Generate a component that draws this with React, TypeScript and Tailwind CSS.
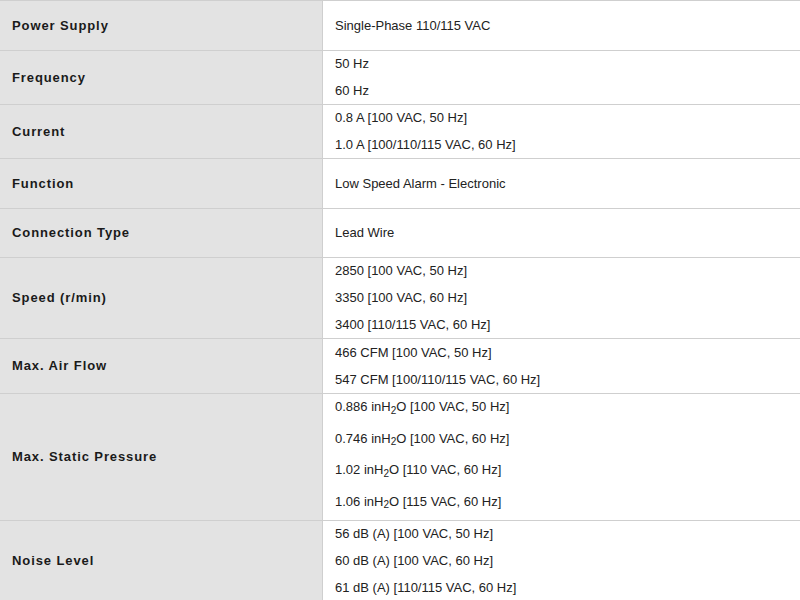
import React from 'react'

type Spec = {
  label: string
  values: React.ReactNode[]
  rowH: string
  lineH?: string
}

const H2O = (
  <>
    inH<sub className="text-[10px] leading-none">2</sub>O
  </>
)

const specs: Spec[] = [
  { label: 'Power Supply', values: ['Single-Phase 110/115 VAC'], rowH: 'h-[50px]' },
  { label: 'Frequency', values: ['50 Hz', '60 Hz'], rowH: 'h-[54px]' },
  { label: 'Current', values: ['0.8 A [100 VAC, 50 Hz]', '1.0 A [100/110/115 VAC, 60 Hz]'], rowH: 'h-[54px]' },
  { label: 'Function', values: ['Low Speed Alarm - Electronic'], rowH: 'h-[50px]' },
  { label: 'Connection Type', values: ['Lead Wire'], rowH: 'h-[49px]' },
  {
    label: 'Speed (r/min)',
    values: ['2850 [100 VAC, 50 Hz]', '3350 [100 VAC, 60 Hz]', '3400 [110/115 VAC, 60 Hz]'],
    rowH: 'h-[81px]',
  },
  {
    label: 'Max. Air Flow',
    values: ['466 CFM [100 VAC, 50 Hz]', '547 CFM [100/110/115 VAC, 60 Hz]'],
    rowH: 'h-[55px]',
  },
  {
    label: 'Max. Static Pressure',
    rowH: 'h-[127px]',
    lineH: 'h-[31.5px] pb-[6px]',
    values: [
      <>0.886 {H2O} [100 VAC, 50 Hz]</>,
      <>0.746 {H2O} [100 VAC, 60 Hz]</>,
      <>1.02 {H2O} [110 VAC, 60 Hz]</>,
      <>1.06 {H2O} [115 VAC, 60 Hz]</>,
    ],
  },
  {
    label: 'Noise Level',
    values: ['56 dB (A) [100 VAC, 50 Hz]', '60 dB (A) [100 VAC, 60 Hz]', '61 dB (A) [110/115 VAC, 60 Hz]'],
    rowH: 'h-[81px]',
  },
]

export default function App() {
  return (
    <div className="w-[800px] h-[600px] overflow-hidden bg-white font-['Liberation_Sans',Arial,sans-serif] text-[13px]">
      <div className="border-t border-[#cfcfcf]">
        {specs.map((spec) => (
          <div key={spec.label} className={`flex border-b border-[#cfcfcf] ${spec.rowH}`}>
            <div className="w-[323px] shrink-0 bg-[#e3e3e3] border-r border-[#cfcfcf] flex items-center pl-3 font-bold tracking-[0.9px] text-[#1a1a1a]">
              {spec.label}
            </div>
            <div className="flex-1 flex flex-col justify-center pl-3 text-[#222]">
              {spec.values.map((v, i) => (
                <div key={i} className={`${spec.lineH ?? 'h-[27px]'} shrink-0 flex items-center`}>
                  <span>{v}</span>
                </div>
              ))}
            </div>
          </div>
        ))}
      </div>
    </div>
  )
}
